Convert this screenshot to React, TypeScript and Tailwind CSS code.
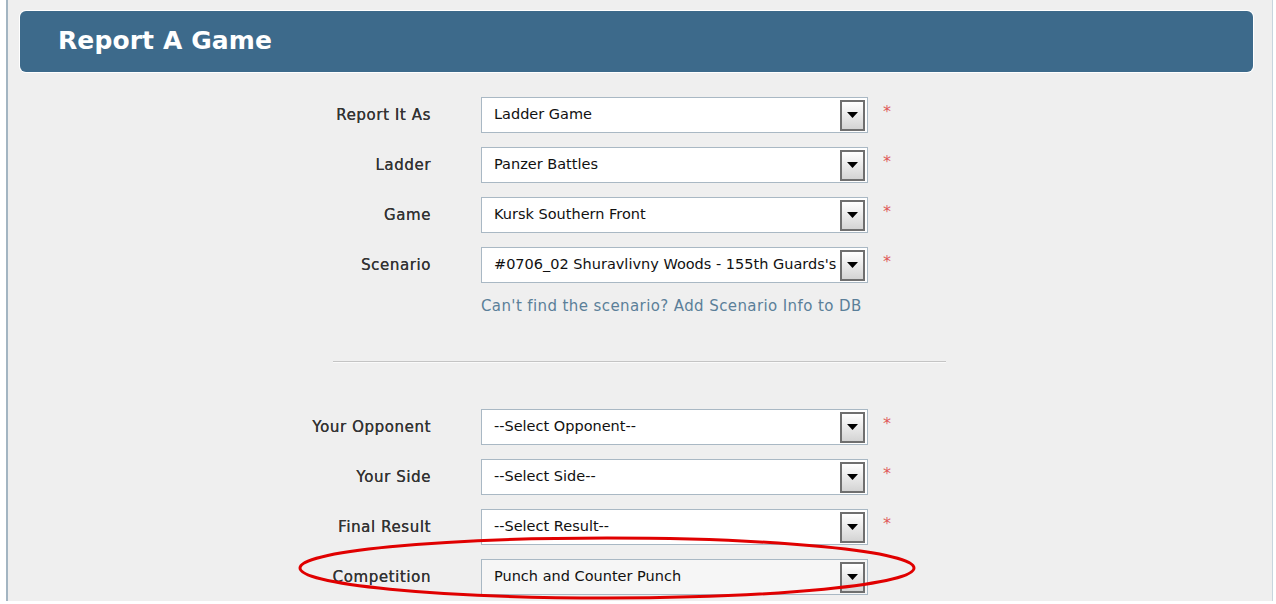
import React from 'react';

const labelFont = { fontFamily: '"DejaVu Sans", Verdana, sans-serif' };

interface SelectBoxProps {
  value: string;
  required?: boolean;
  muted?: boolean;
}

const Arrow = () => (
  <svg width="11" height="6" viewBox="0 0 11 6">
    <path d="M0 0 L11 0 L5.5 6 Z" fill="#000" />
  </svg>
);

const SelectBox: React.FC<SelectBoxProps> = ({ value, required = true, muted }) => (
  <div className="flex items-center">
    <div className={`w-[387px] h-[36px] border border-[#a9b8c4] flex items-center ${muted ? 'bg-[#f6f6f6]' : 'bg-white'}`}>
      <span style={labelFont} className="flex-1 min-w-0 overflow-hidden whitespace-nowrap pl-[12px] text-[14.5px] text-[#111]">
        {value}
      </span>
      <div className="shrink-0 w-[25px] h-[31px] mr-[2px] border-2 border-[#6f6f6f] bg-gradient-to-b from-white to-[#d4d4d4] flex items-center justify-center">
        <Arrow />
      </div>
    </div>
    {required && <span className="ml-[15px] -mt-[6px] text-[16px] text-[#e05a5a]" style={labelFont}>*</span>}
  </div>
);

const Row: React.FC<{ label: string; children: React.ReactNode }> = ({ label, children }) => (
  <div className="flex items-center">
    <div style={labelFont} className="w-[139px] text-right text-[15px] tracking-[0.6px] text-[#333] [text-shadow:0.15px_0_0_#333]">
      {label}
    </div>
    <div className="ml-[50px]">{children}</div>
  </div>
);

export default function App() {
  return (
    <div className="relative w-[1276px] h-[604px] bg-white overflow-hidden">
      <div className="ml-[6px] w-[1267px] h-[601px] bg-[#efefef] border-l-2 border-[#a3b5c2] border-r border-r-[#c8d5de] pt-[11px]">
        <div className="ml-[12px] mr-[19px] h-[61px] rounded-[6px] bg-[#3d6a8b] shadow-[0_0_0_1px_#ffffff] flex items-center pl-[38px]">
          <h1 style={labelFont} className="text-[25px] font-bold text-white tracking-[0.1px] -mt-[2px]">
            Report A Game
          </h1>
        </div>

        <div className="pl-[284px] pt-[25px]">
          <div className="flex flex-col gap-[14px]">
            <Row label="Report It As"><SelectBox value="Ladder Game" /></Row>
            <Row label="Ladder"><SelectBox value="Panzer Battles" /></Row>
            <Row label="Game"><SelectBox value="Kursk Southern Front" /></Row>
            <Row label="Scenario"><SelectBox value="#0706_02 Shuravlivny Woods - 155th Guards's" /></Row>
          </div>
          <div style={labelFont} className="ml-[189px] mt-[15px] leading-[17px] text-[15px] tracking-[0.4px] text-[#5b7f99]">
            Can't find the scenario? Add Scenario Info to DB
          </div>
          <div className="ml-[41px] mt-[46px] w-[613px] h-[2px] border-t border-[#c4c4c4] border-b border-b-[#fafafa]" />
          <div className="mt-[46px] flex flex-col gap-[14px]">
            <Row label="Your Opponent"><SelectBox value="--Select Opponent--" /></Row>
            <Row label="Your Side"><SelectBox value="--Select Side--" /></Row>
            <Row label="Final Result"><SelectBox value="--Select Result--" /></Row>
            <Row label="Competition"><SelectBox value="Punch and Counter Punch" required={false} muted /></Row>
          </div>
        </div>
      </div>

      <svg className="absolute left-0 top-0 pointer-events-none" width="1276" height="604">
        <ellipse cx="607" cy="568" rx="307" ry="30" fill="none" stroke="#e00000" strokeWidth="3" />
      </svg>
    </div>
  );
}
